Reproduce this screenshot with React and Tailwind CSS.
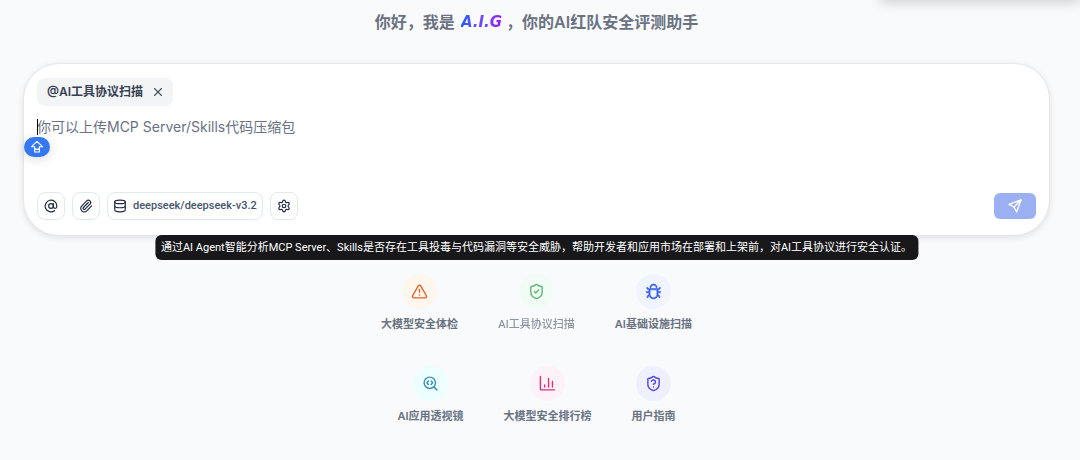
import React from "react";
import {
  AtSign,
  Database,
  Paperclip,
  SearchCode,
  Settings,
  ShieldCheck,
  TriangleAlert,
  X,
} from "lucide-react";
import { AiOutlineBug } from "react-icons/ai";

function SendIcon() {
  return (
    <svg viewBox="0 0 24 24" className="size-4" fill="none" stroke="currentColor" strokeWidth="2" strokeLinejoin="round" strokeLinecap="round" aria-hidden="true">
      <path d="M21 3 3 9.500l7.500 4L14.500 21Z" />
      <path d="M21 3 10.500 13.500" />
    </svg>
  );
}

function UploadIcon() {
  return (
    <svg viewBox="0 0 24 24" className="size-3.5" fill="none" stroke="currentColor" strokeWidth="1.9" strokeLinejoin="round" aria-hidden="true">
      <path d="M12 2.500 2.500 11.500H8V16h8v-4.500h5.500Z" />
      <path d="M8 16h8v4.500H8Z" />
    </svg>
  );
}

function BugIcon({ className }) {
  return <AiOutlineBug className={className} strokeWidth="36" />;
}

function ChartIcon({ className }) {
  return (
    <svg viewBox="0 0 24 24" className={className} fill="none" stroke="currentColor" strokeWidth="2" strokeLinejoin="round" strokeLinecap="round" aria-hidden="true">
      <path d="M2 2v18a1 1 0 0 0 1 1h19" />
      <path d="M8 17v-3M13.500 17V5M19 17V9" />
    </svg>
  );
}

function GuideIcon({ className }) {
  return (
    <svg viewBox="0 0 24 24" className={className} fill="none" stroke="currentColor" strokeWidth="2" strokeLinejoin="round" strokeLinecap="round" aria-hidden="true">
      <path d="M20 13c0 5-3.500 7.500-7.660 8.950a1 1 0 0 1-.67-.01C7.500 20.500 4 18 4 13V6a1 1 0 0 1 1-1c2 0 4.500-1.200 6.240-2.720a1.170 1.170 0 0 1 1.520 0C14.510 3.810 17 5 19 5a1 1 0 0 1 1 1z" />
      <path d="M9.100 9a3 3 0 0 1 5.820 1c0 2-3 3-3 3M12 17h.01" />
    </svg>
  );
}

const rows = [
  [
    { label: "大模型安全体检", Icon: TriangleAlert, tone: "bg-orange-50 text-[#e2622b]" },
    { label: "AI工具协议扫描", Icon: ShieldCheck, tone: "bg-green-50 text-[#30a046]", active: true },
    { label: "AI基础设施扫描", Icon: BugIcon, tone: "bg-[#eff4ff] text-[#3b63e6]" },
  ],
  [
    { label: "AI应用透视镜", Icon: SearchCode, tone: "bg-cyan-50 text-[#3c8fb2]" },
    { label: "大模型安全排行榜", Icon: ChartIcon, tone: "bg-[#fdf2f8] text-[#d73576]" },
    { label: "用户指南", Icon: GuideIcon, tone: "bg-[#eef0ff] text-[#5347dc]" },
  ],
];

function ToolButton({ label, children }) {
  return (
    <button type="button" aria-label={label} className="flex size-7 items-center justify-center rounded-lg border border-slate-200 bg-white">
      {children}
    </button>
  );
}

export default function App() {
  return (
    <div className="relative min-h-screen overflow-hidden bg-[#f9fafc] pr-[30px] pl-[23px] font-['Inter','Noto_Sans_CJK_SC',sans-serif] text-slate-800">
      <div className="absolute -top-10 right-0 h-10 w-[200px] shadow-[0_2px_12px_rgba(0,0,0,0.18)]" />

      <h1 className="flex h-[63px] items-start justify-center pt-2.5 text-base leading-6 font-semibold text-gray-500">
        <span>你好，我是</span>
        <span className="mr-1 ml-1.5 bg-linear-to-r from-blue-600 to-purple-600 bg-clip-text font-['DejaVu_Sans',sans-serif] text-[15px] leading-6 font-bold text-transparent italic">A.I.G</span>
        <span>，你的AI红队安全评测助手</span>
      </h1>

      <main>
        <form className="relative rounded-[36px] border border-gray-200 bg-white px-[13px] pt-3.5 pb-[15px] shadow-[0_2px_6px_rgba(0,0,0,0.1)]" onSubmit={(e) => e.preventDefault()}>
          <div className="flex">
            <div className="flex h-7 items-center gap-2 rounded-lg bg-gray-100 pr-2 pl-2.5 text-xs font-semibold text-gray-700">
              <span>@AI工具协议扫描</span>
              <button type="button" aria-label="移除" className="text-gray-600">
                <X className="size-3.5" strokeWidth={2} />
              </button>
            </div>
          </div>

          <div className="relative mt-[9px]">
            <textarea
              aria-label="消息"
              placeholder="你可以上传MCP Server/Skills代码压缩包"
              className="block h-[77px] w-full resize-none bg-transparent text-sm leading-6 caret-transparent outline-none placeholder:text-gray-500"
            />
            <span className="absolute top-1 left-0 h-4 w-px bg-black" />
            <button type="button" aria-label="上传" className="absolute top-[22px] -left-[13px] flex h-5 w-[26px] items-center justify-center rounded-full bg-[#3478f6] text-white shadow-[0_2px_12px_rgba(0,0,0,0.14)]">
              <UploadIcon />
            </button>
          </div>

          <div className="flex items-center justify-between">
            <div className="flex gap-[7px]">
              <ToolButton label="提及"><AtSign className="size-3.5" /></ToolButton>
              <ToolButton label="附件"><Paperclip className="size-3.5" /></ToolButton>
              <button type="button" className="flex h-7 items-center gap-1.5 rounded-lg border border-slate-200 bg-white px-[5px] font-['Roboto',sans-serif] text-[11px] font-medium text-slate-600">
                <Database className="size-3.5 text-slate-800" />
                deepseek/deepseek-v3.2
              </button>
              <ToolButton label="设置"><Settings className="size-3.5" /></ToolButton>
            </div>
            <button type="submit" aria-label="发送" className="flex h-[26px] w-[42px] items-center justify-center rounded-md bg-[#9bb0f3] text-white">
              <SendIcon />
            </button>
          </div>

          <div role="tooltip" className="absolute top-full left-1/2 -translate-x-1/2 rounded-md bg-[#18181b] px-1.5 py-1 font-['Roboto','Noto_Sans_CJK_SC',sans-serif] text-[11px] leading-[17px] whitespace-nowrap text-white">
            通过AI Agent智能分析MCP Server、Skills是否存在工具投毒与代码漏洞等安全威胁，帮助开发者和应用市场在部署和上架前，对AI工具协议进行安全认证。
          </div>
        </form>

        <nav className="mt-[38px] flex flex-col gap-9" aria-label="功能">
          {rows.map((row, i) => (
            <div key={i} className="flex justify-center gap-10">
              {row.map(({ label, Icon, tone, active }) => (
                <button key={label} type="button" className={active ? "flex flex-col items-center gap-[9px] font-medium opacity-75" : "flex flex-col items-center gap-[9px] font-semibold"}>
                  <span className={`flex size-[35px] items-center justify-center rounded-full ${tone}`}>
                    <Icon className="size-[17px]" />
                  </span>
                  <span className="text-[11px] leading-3 text-gray-500">{label}</span>
                </button>
              ))}
            </div>
          ))}
        </nav>
      </main>
    </div>
  );
}
